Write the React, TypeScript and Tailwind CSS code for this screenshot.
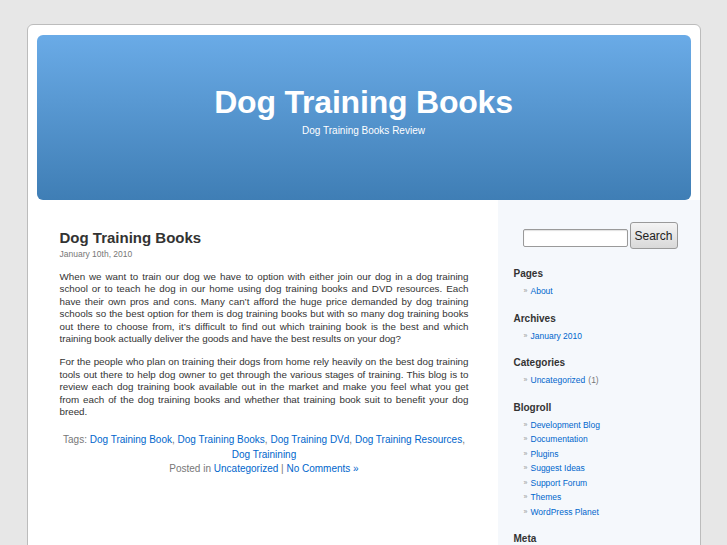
const tags = [
  'Dog Training Book',
  'Dog Training Books',
  'Dog Training DVd',
  'Dog Training Resources',
  'Dog Trainining',
]

const blogroll = [
  'Development Blog',
  'Documentation',
  'Plugins',
  'Suggest Ideas',
  'Support Forum',
  'Themes',
  'WordPress Planet',
]

// lines broken as in the original page so the justified block wraps the same way
const para1 = [
  'When we want to train our dog we have to option with either join our dog in a dog training',
  'school or to teach he dog in our home using dog training books and DVD resources. Each',
  'have their own pros and cons. Many can’t afford the huge price demanded by dog training',
  'schools so the best option for them is dog training books but with so many dog training books',
  'out there to choose from, it’s difficult to find out which training book is the best and which',
  'training book actually deliver the goods and have the best results on your dog?',
]

const para2 = [
  'For the people who plan on training their dogs from home rely heavily on the best dog training',
  'tools out there to help dog owner to get through the various stages of training. This blog is to',
  'review each dog training book available out in the market and make you feel what you get',
  'from each of the dog training books and whether that training book suit to benefit your dog',
  'breed.',
]

function Para({ lines, className }: { lines: string[]; className?: string }) {
  return (
    <div className={`text-[9.8px] leading-[12.4px] text-[#333] ${className ?? ''}`}>
      {lines.map((l, i) => (
        <div
          key={i}
          className={i < lines.length - 1 ? 'whitespace-nowrap text-justify [text-align-last:justify]' : 'whitespace-nowrap'}
        >
          {l}
        </div>
      ))}
    </div>
  )
}

function SideList({ title, items }: { title: string; items: { label: string; extra?: string }[] }) {
  return (
    <div className="mb-[14px]">
      <h2 className="text-[10px] leading-[12px] font-bold text-[#333]">{title}</h2>
      <ul className="mt-[4px] pl-[10px]">
        {items.map((it) => (
          <li key={it.label} className="flex items-center text-[8.5px] leading-[14.5px]">
            <span className="w-[7px] text-[#999] text-[7px]">»</span>
            <a href="#" className="text-[#0066cc]">{it.label}</a>
            {it.extra && <span className="ml-[3px] text-[#777]">{it.extra}</span>}
          </li>
        ))}
      </ul>
    </div>
  )
}

export default function App() {
  return (
    <div className="min-h-screen bg-[#e7e7e7] pt-[24px] font-['Liberation_Sans',Arial,sans-serif]">
      <div className="mx-auto w-[674px] rounded-t-[6px] border border-[#bcbcbc] bg-white">
        {/* Header */}
        <div className="px-[9px] pt-[10px]">
          <div className="h-[165px] rounded-[6px] bg-linear-to-b from-[#6aabe7] to-[#3f7eb5] pt-[49px] text-center text-white">
            <h1 className="text-[32px] leading-[36px] font-bold tracking-[-0.2px]">Dog Training Books</h1>
            <p className="mt-[5px] text-[10px] leading-[12px]">Dog Training Books Review</p>
          </div>
        </div>

        <div className="flex">
          {/* Post column */}
          <div className="w-[470px] pt-[29px] pl-[32px] pr-[29px] pb-10">
            <h2 className="text-[15px] leading-[18px] font-bold text-[#333]">Dog Training Books</h2>
            <p className="mt-[2px] text-[8.5px] leading-[11px] text-[#777]">January 10th, 2010</p>

            <Para lines={para1} className="mt-[11px]" />
            <Para lines={para2} className="mt-[11px]" />

            <p className="mt-[15px] text-center text-[10px] leading-[14.3px] text-[#777]">
              Tags:{' '}
              {tags.map((t, i) => (
                <span key={t}>
                  <a href="#" className="text-[#0066cc]">{t}</a>
                  {i < tags.length - 1 ? ', ' : ''}
                </span>
              ))}
              <br />
              Posted in <a href="#" className="text-[#0066cc]">Uncategorized</a> |{' '}
              <a href="#" className="text-[#0066cc]">No Comments »</a>
            </p>
          </div>

          {/* Sidebar */}
          <div className="flex-1 bg-[#f5f8fc] pt-[22px] pl-[16px] pb-10">
            <form className="mb-[19px] flex items-end pl-[9px]" onSubmit={(e) => e.preventDefault()}>
              <input
                type="text"
                className="mb-[2px] h-[18px] w-[105px] rounded-[2px] border border-[#9a9a9a] bg-white shadow-[inset_0_1px_1px_rgba(0,0,0,0.12)] outline-none"
              />
              <button
                type="submit"
                className="ml-[2px] h-[27px] w-[48px] rounded-[3px] border border-[#9a9a9a] bg-linear-to-b from-[#f4f4f4] to-[#d9d9d9] text-[12px] text-[#222]"
              >
                Search
              </button>
            </form>

            <SideList title="Pages" items={[{ label: 'About' }]} />
            <SideList title="Archives" items={[{ label: 'January 2010' }]} />
            <SideList title="Categories" items={[{ label: 'Uncategorized', extra: '(1)' }]} />
            <SideList title="Blogroll" items={blogroll.map((b) => ({ label: b }))} />
            <SideList title="Meta" items={[{ label: 'Log in' }]} />
          </div>
        </div>
      </div>
    </div>
  )
}
